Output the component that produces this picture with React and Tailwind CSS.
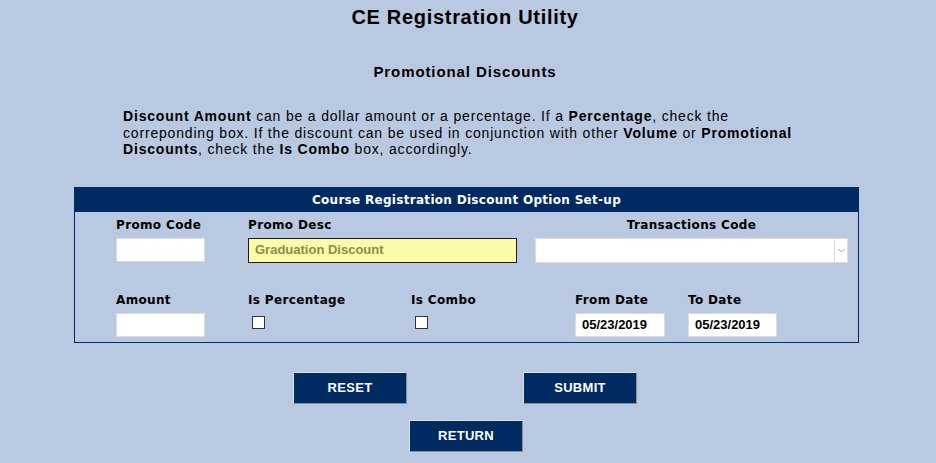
export default function App() {
  const label = "text-[12px] font-bold leading-[14px] tracking-[0.35px]";
  const btn = "h-[32px] w-[114px] border border-t-[#e0e0e0] border-l-[#e0e0e0] border-r-[#909090] border-b-[#909090] bg-[#002a62] text-[13px] font-bold tracking-[0.3px] text-white";

  return (
    <div className="min-h-[463px] w-[936px] bg-[#b9c9e1] font-['Liberation_Sans',Arial,sans-serif] text-black">
      <h1 className="pt-[5px] text-center text-[20px] font-bold leading-[24px] tracking-[0.7px] ml-[-6px]">CE Registration Utility</h1>
      <h2 className="mt-[34px] text-center text-[15px] font-bold leading-[18px] tracking-[0.9px] ml-[-6px]">Promotional Discounts</h2>

      <p className="ml-[123px] mt-[27px] w-[720px] text-[14px] leading-[16.5px] tracking-[0.82px]">
        <b>Discount Amount</b> can be a dollar amount or a percentage. If a <b>Percentage</b>, check the<br />
        correponding box. If the discount can be used in conjunction with other <b>Volume</b> or <b>Promotional</b><br />
        <b>Discounts</b>, check the <b>Is Combo</b> box, accordingly.
      </p>

      <div className="ml-[74px] mt-[29px] h-[156px] w-[785px] border border-[#002a62] font-['DejaVu_Sans',Verdana,sans-serif]">
        <div className="h-[24px] bg-[#002a62] text-center text-[12px] font-bold leading-[24px] tracking-[0.3px] text-white">
          Course Registration Discount Option Set-up
        </div>

        <div className="flex pt-[6px]">
          <div className="ml-[41px] w-[132px]">
            <div className={label}>Promo Code</div>
            <div className="mt-[6px] h-[24px] w-[89px] border border-[#dcdcdc] bg-white" />
          </div>
          <div className="w-[287px]">
            <div className={label}>Promo Desc</div>
            <div className="mt-[6px] flex h-[25px] w-[269px] items-center border border-[#1a1a2a] bg-[#fafca8] pl-[6px] font-['Liberation_Sans',Arial,sans-serif] text-[13px] font-bold text-[#8d8d4c]">
              Graduation Discount
            </div>
          </div>
          <div className="w-[313px]">
            <div className={label + " text-center"}>Transactions Code</div>
            <div className="mt-[6px] flex h-[25px] border border-[#dcdcdc] bg-white">
              <div className="flex-1" />
              <div className="flex w-[13px] items-center justify-center border-l border-[#dcdcdc]">
                <svg width="7" height="5" viewBox="0 0 7 5" fill="none" stroke="#a0a0a0" strokeWidth="1">
                  <path d="M0.5 1 L3.5 4 L6.5 1" />
                </svg>
              </div>
            </div>
          </div>
        </div>

        <div className="flex pt-[30px]">
          <div className="ml-[41px] w-[132px]">
            <div className={label}>Amount</div>
            <div className="mt-[6px] h-[24px] w-[89px] border border-[#dcdcdc] bg-white" />
          </div>
          <div className="w-[163px]">
            <div className={label}>Is Percentage</div>
            <div className="ml-[4px] mt-[9px] h-[13px] w-[13px] border border-[#333] bg-white" />
          </div>
          <div className="w-[164px]">
            <div className={label}>Is Combo</div>
            <div className="ml-[4px] mt-[9px] h-[13px] w-[13px] border border-[#333] bg-white" />
          </div>
          <div className="w-[113px]">
            <div className={label}>From Date</div>
            <div className="mt-[6px] flex h-[24px] w-[90px] items-center border border-[#dcdcdc] bg-white pl-[6px] font-['Liberation_Sans',Arial,sans-serif] text-[13px] font-bold">
              05/23/2019
            </div>
          </div>
          <div>
            <div className={label}>To Date</div>
            <div className="mt-[6px] flex h-[24px] w-[89px] items-center border border-[#dcdcdc] bg-white pl-[6px] font-['Liberation_Sans',Arial,sans-serif] text-[13px] font-bold">
              05/23/2019
            </div>
          </div>
        </div>
      </div>

      <div className="mt-[29px] flex justify-center gap-[116px] pr-[6px]">
        <button className={btn}>RESET</button>
        <button className={btn}>SUBMIT</button>
      </div>
      <div className="mt-[16px] flex justify-center pr-[4px]">
        <button className={btn}>RETURN</button>
      </div>
    </div>
  );
}
